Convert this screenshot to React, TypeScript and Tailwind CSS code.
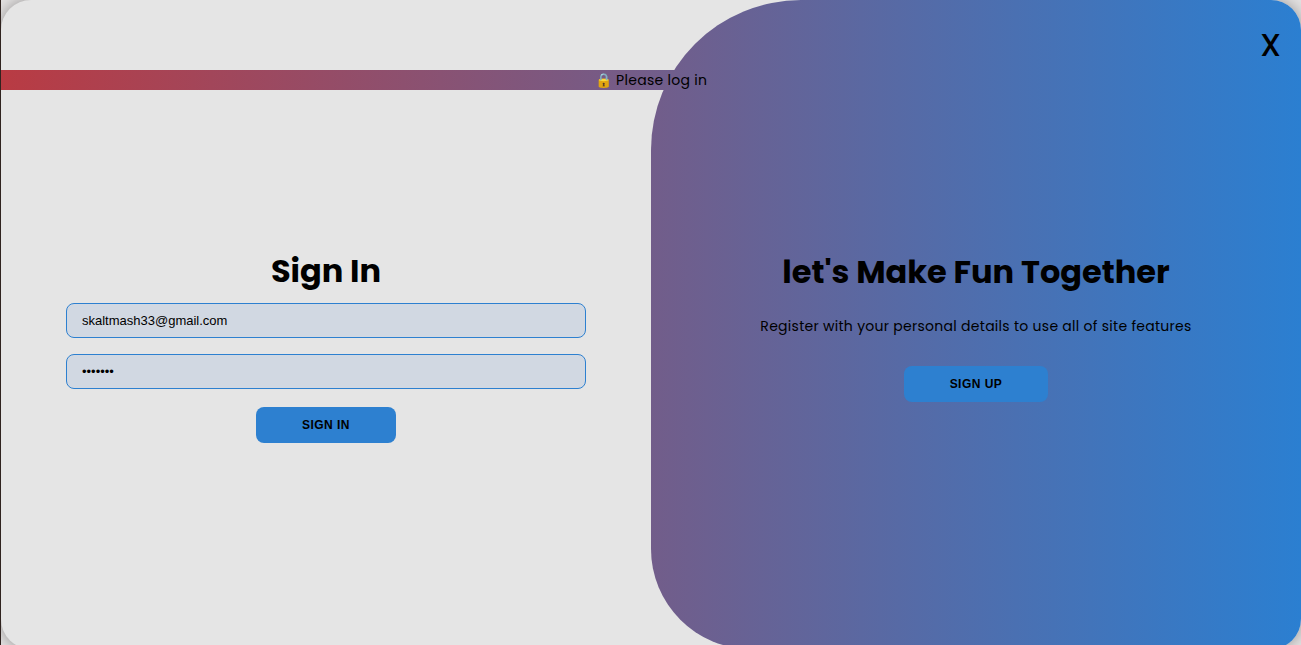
import React, { useState } from "react";

const buttonStyle =
  "h-9 rounded-lg bg-[#2d80d0] text-xs font-semibold uppercase text-black font-['Liberation_Sans',Arial,sans-serif] tracking-[0.04em]";

const fieldStyle =
  "h-[35px] w-full rounded-lg border border-[#2d80d0] bg-[#d1d8e2] px-[15px] text-[13px] text-black outline-none font-['Liberation_Sans',Arial,sans-serif]";

function SignInForm() {
  const [email, setEmail] = useState("skaltmash33@gmail.com");
  const [password, setPassword] = useState("letsfun");

  return (
    <form
      className="flex w-1/2 flex-col items-center justify-center px-[5%] pt-10"
      onSubmit={(event) => event.preventDefault()}
    >
      <h1 className="mb-2 text-[32px] leading-12 font-bold">Sign In</h1>
      <input
        className={fieldStyle}
        type="email"
        aria-label="Email"
        value={email}
        onChange={(event) => setEmail(event.target.value)}
      />
      <input
        className={`${fieldStyle} mt-4`}
        type="password"
        aria-label="Password"
        value={password}
        onChange={(event) => setPassword(event.target.value)}
      />
      <button type="submit" className={`${buttonStyle} mt-[18px] w-[140px]`}>
        Sign In
      </button>
    </form>
  );
}

function WelcomePanel() {
  return (
    <section className="flex w-1/2 flex-col items-center justify-center rounded-l-[150px] rounded-bl-[100px] bg-linear-to-r/srgb from-[#725d8a] to-[#2b7fd1] px-[30px] text-center">
      <h1 className="text-[32px] leading-12 font-bold">let's Make Fun Together</h1>
      <p className="my-5 text-sm leading-5 tracking-[0.02em]">
        Register with your personal details to use all of site features
      </p>
      <button type="button" className={`${buttonStyle} mt-[10px] w-36`}>
        Sign Up
      </button>
    </section>
  );
}

export default function App() {
  return (
    <div className="h-screen overflow-hidden border-l border-[#30231f] bg-[#e4e2e2] font-[Poppins,Inter,sans-serif] text-black">
      <main className="relative flex h-[calc(100vh+4px)] overflow-hidden rounded-[30px] bg-[#e5e5e5] shadow-[0_0_15px_rgba(0,0,0,0.35)]">
        <SignInForm />
        <WelcomePanel />
        <p
          role="status"
          className="absolute inset-x-0 top-[70px] bg-linear-to-r/srgb from-[#b93b43] to-[#2b7fd1] text-center text-sm leading-5 tracking-[0.02em]"
        >
          🔒 Please log in
        </p>
        <button
          type="button"
          aria-label="Close"
          className="absolute top-[25px] right-5 text-[32px] leading-10 font-medium"
        >
          X
        </button>
      </main>
    </div>
  );
}
